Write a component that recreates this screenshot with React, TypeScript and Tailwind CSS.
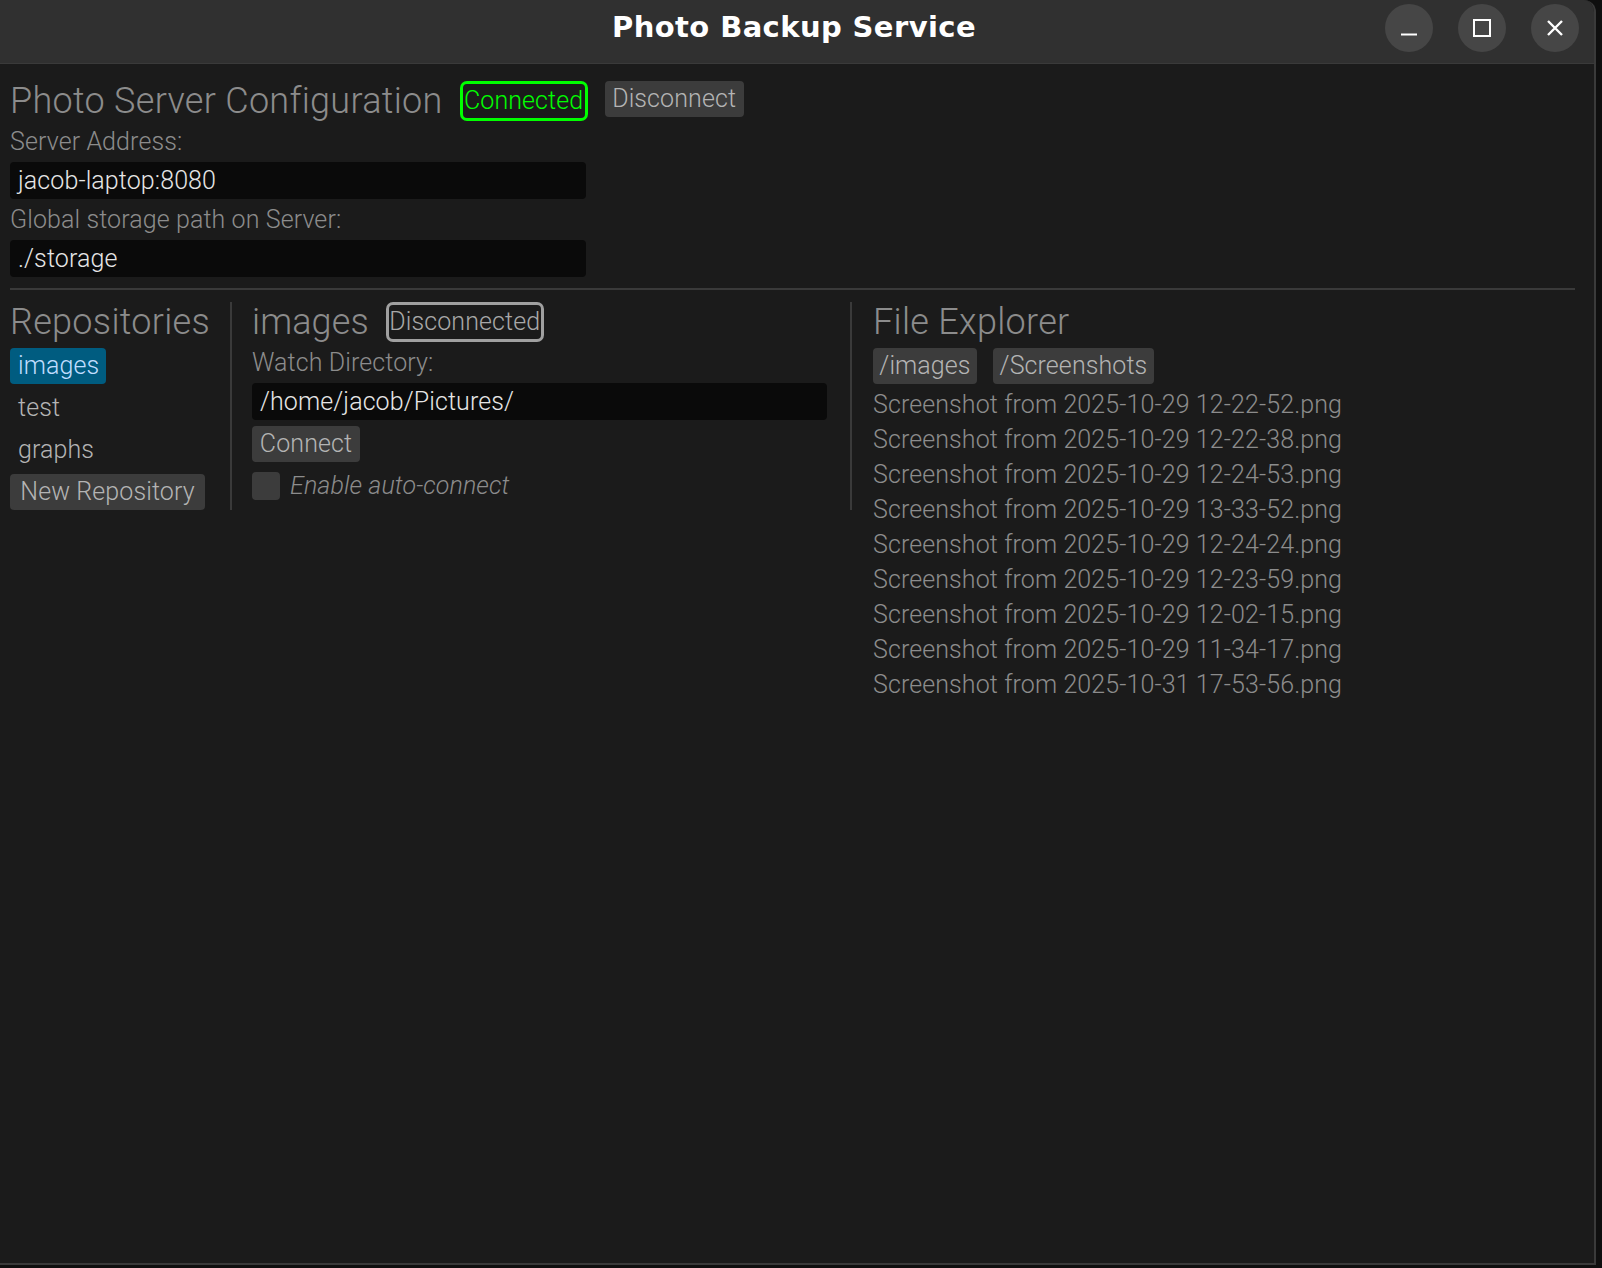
import React from "react";

const files = [
  "Screenshot from 2025-10-29 12-22-52.png",
  "Screenshot from 2025-10-29 12-22-38.png",
  "Screenshot from 2025-10-29 12-24-53.png",
  "Screenshot from 2025-10-29 13-33-52.png",
  "Screenshot from 2025-10-29 12-24-24.png",
  "Screenshot from 2025-10-29 12-23-59.png",
  "Screenshot from 2025-10-29 12-02-15.png",
  "Screenshot from 2025-10-29 11-34-17.png",
  "Screenshot from 2025-10-31 17-53-56.png",
];

function TitleBar() {
  return (
    <div className="grid h-[64px] shrink-0 grid-cols-[1fr_auto_1fr] border-b border-[#3a3a3a] bg-[#303030]">
      <div />
      <div className="mr-[6px] flex h-[56px] items-center font-['DejaVu_Sans',sans-serif] text-[29px] font-bold tracking-[0.4px] text-white">
        Photo Backup Service
      </div>
      <div className="flex h-[56px] items-center justify-end gap-[25px] pr-[15px]">
        {/* minimize */}
        <div className="flex size-[48px] items-center justify-center rounded-full bg-[#464646]">
          <svg width="16" height="16" viewBox="0 0 16 16">
            <path d="M0 14.5h16" stroke="white" strokeWidth="2" />
          </svg>
        </div>
        {/* maximize */}
        <div className="flex size-[48px] items-center justify-center rounded-full bg-[#464646]">
          <svg width="18" height="18" viewBox="0 0 18 18">
            <rect x="1" y="1" width="16" height="16" fill="none" stroke="white" strokeWidth="2" />
          </svg>
        </div>
        {/* close */}
        <div className="flex size-[48px] items-center justify-center rounded-full bg-[#464646]">
          <svg width="16" height="16" viewBox="0 0 16 16">
            <path d="M1 1l14 14M15 1L1 15" stroke="white" strokeWidth="2.4" />
          </svg>
        </div>
      </div>
    </div>
  );
}

function Button({ children, className }: { children: React.ReactNode; className: string }) {
  return (
    <div
      className={
        "flex h-[36px] items-center justify-center rounded-[4px] bg-[#3c3c3c] text-[#b4b4b4] " +
        className
      }
    >
      {children}
    </div>
  );
}

function TextInput({ value, className }: { value: string; className: string }) {
  return (
    <div
      className={
        "mt-[6px] flex h-[37px] items-center rounded-[4px] bg-[#0a0a0a] px-[8px] text-[#e6e6e6] " +
        className
      }
    >
      {value}
    </div>
  );
}

export default function App() {
  return (
    <div className="h-[1268px] w-full overflow-hidden bg-[#0f0f0f] font-['Roboto',sans-serif] font-light text-[25px] tracking-[0.1px] text-[#8c8c8c]">
      <div className="flex h-[1265px] w-[1596px] flex-col overflow-hidden rounded-tr-[12px] border-r-2 border-b-2 border-[#3a3a3a] bg-[#1b1b1b]">
        <TitleBar />

        <div className="flex flex-col pt-[17px] pr-[19px] pl-[10px]">
          {/* Server configuration */}
          <div className="flex h-[40px] items-start gap-[17px]">
            <h1 className="text-[36px] leading-[40px] tracking-[0.3px]">Photo Server Configuration</h1>
            <div className="flex h-[40px] w-[128px] items-center justify-center rounded-[7px] border-[3px] border-[#00ff00] text-[#00ff00]">
              Connected
            </div>
            <Button className="w-[139px]">Disconnect</Button>
          </div>
          <div className="mt-[6px] leading-[29px]">Server Address:</div>
          <TextInput value="jacob-laptop:8080" className="w-[576px]" />
          <div className="mt-[6px] leading-[29px]">Global storage path on Server:</div>
          <TextInput value="./storage" className="w-[576px]" />

          <div className="mt-[11px] h-[2px] bg-[#3a3a3a]" />

          <div className="mt-[12px] flex items-start">
            {/* Repositories */}
            <div className="flex w-[207px] flex-col">
              <h2 className="text-[36px] leading-[40px] tracking-[0.3px]">Repositories</h2>
              <div className="mt-[6px] flex flex-col items-start gap-[6px]">
                <div className="flex h-[36px] w-[96px] items-center rounded-[4px] bg-[#005c80] px-[8px] text-[#c0deff]">
                  images
                </div>
                <div className="flex h-[36px] items-center px-[8px] text-[#b4b4b4]">test</div>
                <div className="flex h-[36px] items-center px-[8px] text-[#b4b4b4]">graphs</div>
                <Button className="w-[195px]">New Repository</Button>
              </div>
            </div>

            <div className="mr-[20px] ml-[13px] h-[208px] w-[2px] bg-[#3a3a3a]" />

            {/* Selected repository */}
            <div className="flex w-[575px] flex-col">
              <div className="flex h-[40px] items-start gap-[17px]">
                <h2 className="text-[36px] leading-[40px]">images</h2>
                <div className="flex h-[40px] w-[158px] items-center justify-center rounded-[7px] border-[3px] border-[#a0a0a0] text-[#a8a8a8]">
                  Disconnected
                </div>
              </div>
              <div className="mt-[6px] leading-[29px]">Watch Directory:</div>
              <TextInput value="/home/jacob/Pictures/" className="w-[575px]" />
              <Button className="mt-[6px] w-[108px]">Connect</Button>
              <div className="mt-[6px] flex h-[36px] items-center gap-[10px]">
                <div className="size-[28px] rounded-[4px] bg-[#3c3c3c]" />
                <span className="italic">Enable auto-connect</span>
              </div>
            </div>

            <div className="mr-[21px] ml-[23px] h-[208px] w-[2px] bg-[#3a3a3a]" />

            {/* File explorer */}
            <div className="flex flex-col">
              <h2 className="text-[36px] leading-[40px] tracking-[0.3px]">File Explorer</h2>
              <div className="mt-[6px] flex gap-[16px]">
                <Button className="w-[104px]">/images</Button>
                <Button className="w-[161px]">/Screenshots</Button>
              </div>
              <ul className="mt-[6px] flex flex-col gap-[6px]">
                {files.map((f) => (
                  <li key={f} className="leading-[29px]">
                    {f}
                  </li>
                ))}
              </ul>
            </div>
          </div>
        </div>
      </div>
    </div>
  );
}
